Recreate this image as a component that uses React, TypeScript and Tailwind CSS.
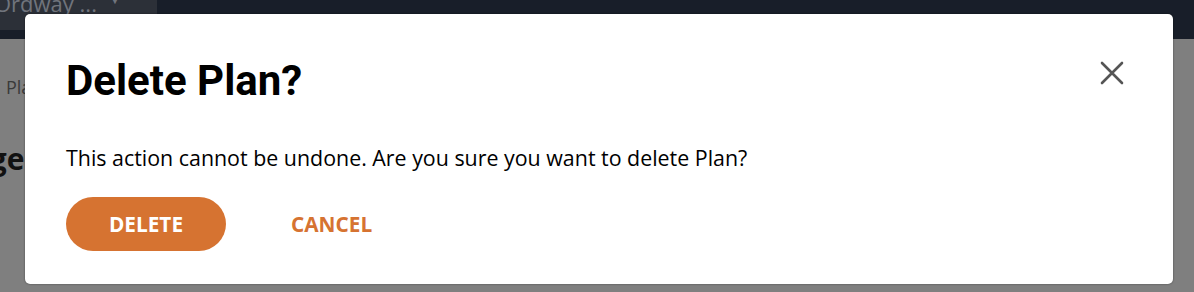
import React from "react";

function CloseIcon() {
  return (
    <svg viewBox="0 0 24 24" className="h-[24px] w-[24px]" fill="none" stroke="#555555" strokeWidth="2.6" strokeLinecap="round">
      <path d="M2 2 L22 22 M22 2 L2 22" />
    </svg>
  );
}

export default function App() {
  return (
    <div className="relative h-[292px] w-[1194px] overflow-hidden bg-[#7f7f7f] font-['Open_Sans',sans-serif]">
      {/* page behind the overlay */}
      <div className="h-[39px] bg-[#181e29]">
        <div className="flex h-[30px] w-[157px] items-start justify-between rounded-br-[14px] bg-[#2c3038] pr-[36px] text-[22px] leading-none text-[#70747c]">
          <span className="-ml-[6px] -mt-[8px]">Ordway ...</span>
          <span className="-mt-[6px] text-[12px]">▼</span>
        </div>
      </div>
      <div className="pl-[6px] pt-[36px] text-[18px] leading-[24px] text-[#3a3a3a]">Plan</div>
      <div className="-ml-[66px] pt-[42px] text-[30px] font-bold leading-[36px] text-[#111]">Usage</div>

      {/* dialog */}
      <div className="absolute left-[25px] top-[14px] h-[270px] w-[1148px] rounded-[5px] bg-white pl-[41px] pr-[49px] shadow-[0_0_2px_rgba(0,0,0,0.5)]">
        <div className="flex items-start justify-between pt-[42px]">
          <h2 className="font-['Roboto',sans-serif] text-[42px] font-bold leading-[50px] text-black">Delete Plan?</h2>
          <button type="button" className="mt-[5px]">
            <CloseIcon />
          </button>
        </div>
        <p className="mt-[37px] text-[21.4px] leading-[30px] text-black">
          This action cannot be undone. Are you sure you want to delete Plan?
        </p>
        <div className="mt-[24px] flex items-center gap-[65px]">
          <button
            type="button"
            className="h-[54px] w-[160px] rounded-full bg-[#d67331] pt-[1px] text-[20.8px] font-bold text-white"
          >
            DELETE
          </button>
          <button type="button" className="pt-[1px] text-[20.8px] font-bold text-[#d67331]">
            CANCEL
          </button>
        </div>
      </div>
    </div>
  );
}
